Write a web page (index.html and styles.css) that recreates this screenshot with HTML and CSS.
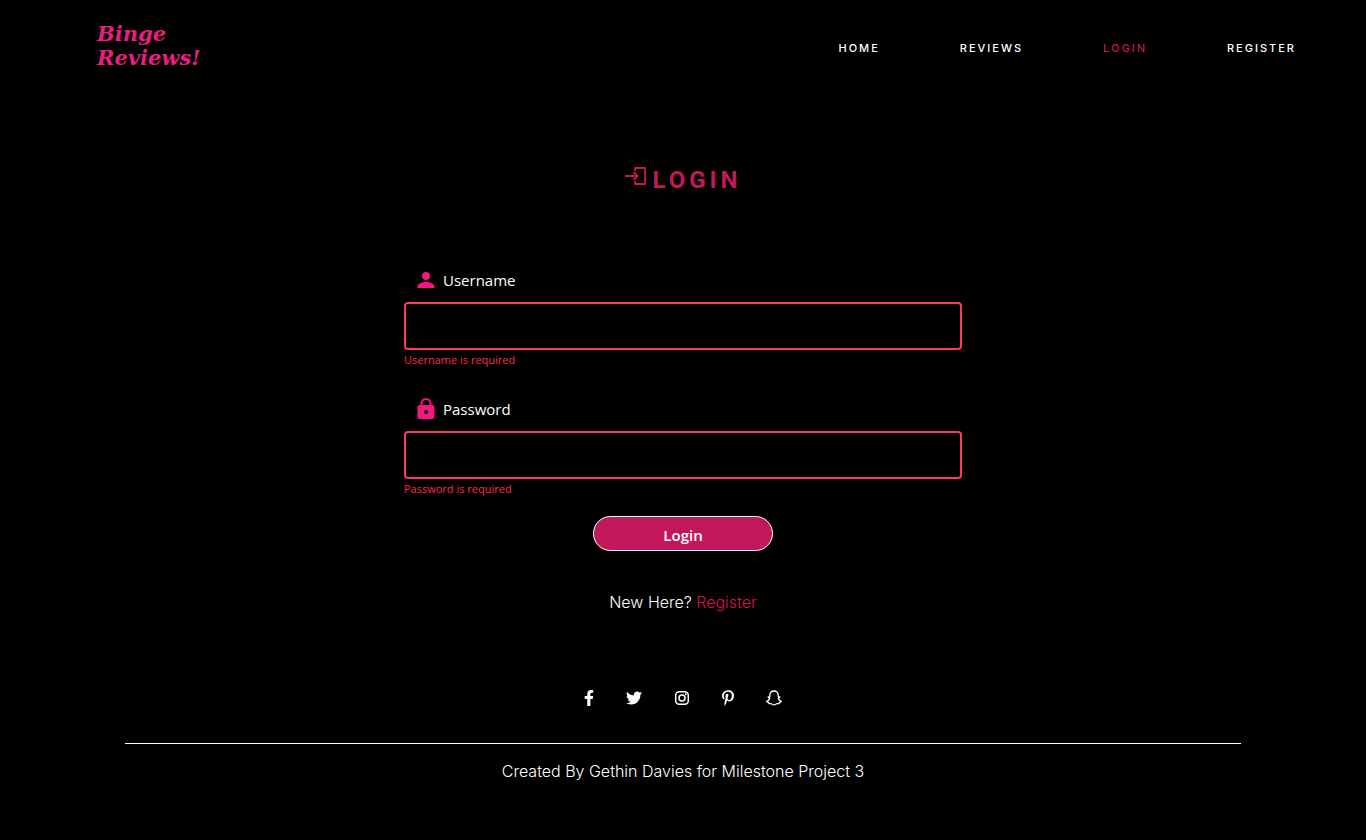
FILE: index.html
```html
<!DOCTYPE html>
<html lang="en">
<head>
<meta charset="utf-8">
<meta name="viewport" content="width=device-width, initial-scale=1">
<title>Binge Reviews! - Login</title>
<link rel="stylesheet" href="styles.css">
</head>
<body>
<header class="header">
  <a class="logo" href="#"><span>Binge</span><span>Reviews!</span></a>
  <nav class="nav">
    <a href="#">HOME</a>
    <a href="#">REVIEWS</a>
    <a href="#" class="active">LOGIN</a>
    <a href="#">REGISTER</a>
  </nav>
</header>
<main class="main">
  <h1 class="title">
    <svg class="title-icon" viewBox="0 0 22 20" aria-hidden="true"><path d="M11 5V2H21V18H11V15M1 10H14M9.500 6L13.500 10L9.500 14" fill="none" stroke="currentColor" stroke-width="1.800"/></svg>
    <span>LOGIN</span>
  </h1>
  <form class="form" novalidate>
    <div class="field">
      <label class="label" for="username">
        <svg class="label-icon" viewBox="0 0 24 24" aria-hidden="true"><path d="M12 12a4 4 0 1 0 0-8 4 4 0 0 0 0 8zm0 2c-3 0-8.500 1.500-8.500 4.200V20h17v-1.800C20.500 15.500 15 14 12 14z"/></svg>
        <span>Username</span>
      </label>
      <input class="input" id="username" type="text" aria-describedby="username-error">
      <p class="error" id="username-error">Username is required</p>
    </div>
    <div class="field">
      <label class="label" for="password">
        <svg class="label-icon" viewBox="0 0 24 24" aria-hidden="true"><path fill-rule="evenodd" d="M18.500 8H17.500V6.500a5.500 5.500 0 0 0-11 0V8h-1A2 2 0 0 0 3.500 10v10a2 2 0 0 0 2 2h13a2 2 0 0 0 2-2V10a2 2 0 0 0-2-2zM12 17a2 2 0 1 1 0-4 2 2 0 0 1 0 4zM15.500 8h-7V6.500a3.500 3.500 0 0 1 7 0z"/></svg>
        <span>Password</span>
      </label>
      <input class="input" id="password" type="password" aria-describedby="password-error">
      <p class="error" id="password-error">Password is required</p>
    </div>
    <button class="submit" type="button">Login</button>
  </form>
  <p class="signup">New Here? <a href="#">Register</a></p>
</main>
<footer class="footer">
  <div class="social">
    <a href="#" aria-label="Facebook"><svg class="facebook" viewBox="0 0 320 512"><path d="M279.140 288l14.220-92.660h-88.910v-60.130c0-25.350 12.420-50.060 52.240-50.060h40.420V6.260S260.430 0 225.360 0c-73.220 0-121.080 44.380-121.080 124.720v70.620H22.890V288h81.390v224h100.170V288z"/></svg></a>
    <a href="#" aria-label="Twitter"><svg viewBox="0 0 512 512"><path d="M459.370 151.716c.325 4.548.325 9.097.325 13.645 0 138.720-105.583 298.558-298.558 298.558-59.452 0-114.680-17.219-161.137-47.106 8.447.974 16.568 1.299 25.340 1.299 49.055 0 94.213-16.568 130.274-44.832-46.132-.975-84.792-31.188-98.112-72.772 6.498.974 12.995 1.624 19.818 1.624 9.421 0 18.843-1.300 27.614-3.573-48.081-9.747-84.143-51.980-84.143-102.985v-1.299c13.969 7.797 30.214 12.670 47.431 13.319-28.264-18.843-46.781-51.005-46.781-87.391 0-19.492 5.197-37.360 14.294-52.954 51.655 63.675 129.300 105.258 216.365 109.807-1.624-7.797-2.599-15.918-2.599-24.040 0-57.828 46.782-104.934 104.934-104.934 30.213 0 57.502 12.670 76.670 33.137 23.715-4.548 46.456-13.320 66.599-25.340-7.798 24.366-24.366 44.833-46.132 57.827 21.117-2.273 41.584-8.122 60.426-16.243-14.292 20.791-32.161 39.308-52.628 54.253z"/></svg></a>
    <a href="#" aria-label="Instagram"><svg viewBox="0 0 16 16"><rect x="1.700" y="1.700" width="12.600" height="12.600" rx="3.500" fill="none" stroke="currentColor" stroke-width="1.500"/><circle cx="8" cy="8" r="3" fill="none" stroke="currentColor" stroke-width="1.500"/><circle cx="11.800" cy="4.200" r="1"/></svg></a>
    <a href="#" aria-label="Pinterest"><svg class="pinterest" viewBox="0 0 384 512"><path d="M204 6.500C101.400 6.500 0 74.900 0 185.600 0 256 39.600 296 63.600 296c9.900 0 15.600-27.600 15.600-35.400 0-9.300-23.700-29.100-23.700-67.800 0-80.400 61.200-137.400 140.400-137.400 68.100 0 118.500 38.700 118.500 109.800 0 53.100-21.300 152.700-90.300 152.700-24.900 0-46.200-18-46.200-43.800 0-37.800 26.400-74.400 26.400-113.400 0-66.200-93.900-54.200-93.900 25.800 0 16.800 2.100 35.400 9.600 50.700-13.800 59.400-42 147.900-42 209.100 0 18.900 2.700 37.500 4.500 56.400 3.400 3.800 1.700 3.400 6.900 1.500 50.400-69 48.600-82.500 71.400-172.800 12.300 23.400 44.100 36 69.300 36 106.200 0 153.900-103.500 153.900-196.800C384 71.300 298.200 6.500 204 6.500z"/></svg></a>
    <a href="#" aria-label="Snapchat"><svg viewBox="0 0 16 16"><path d="M8 1C5.300 1 3.800 2.800 3.800 5v1.800c-.5.300-1.100 0-1.500 0-.5.600.7 1.100 1.300 1.500.3.700-1.400 2.700-3 3 .1.900 1.200 1 2 1.200l.4 1.100c.9 0 1.800-.3 2.600.2.800.6 1.400 1.100 2.400 1.100s1.600-.5 2.400-1.100c.8-.5 1.700-.2 2.600-.2l.4-1.100c.8-.2 1.900-.3 2-1.200-1.600-.3-3.300-2.300-3-3 .6-.4 1.800-.9 1.300-1.500-.4 0-1 .3-1.500 0V5C12.200 2.800 10.700 1 8 1z" fill="none" stroke="currentColor" stroke-width="1.300" stroke-linejoin="round"/></svg></a>
  </div>
  <p class="credit">Created By Gethin Davies for Milestone Project 3</p>
</footer>
</body>
</html>
```
FILE: styles.css
```css
* {
  box-sizing: border-box;
}

body {
  margin: 0;
  background: #000;
  color: #fff;
  font-family: Inter, sans-serif;
  font-size: 16px;
  font-weight: 300;
  line-height: 24px;
}

a {
  color: inherit;
  text-decoration: none;
}

p,
h1 {
  margin: 0;
}

svg {
  display: block;
  fill: currentColor;
}

.header {
  display: flex;
  align-items: center;
  justify-content: space-between;
  min-height: 96px;
  padding: 0 30px 0 97px;
}

.logo {
  display: flex;
  flex-direction: column;
  padding-bottom: 4px;
  color: #e91e80;
  font-family: "DejaVu Serif", serif;
  font-size: 21px;
  font-style: italic;
  font-weight: 700;
  line-height: 24px;
}

.nav {
  display: flex;
}

.nav a {
  padding: 0 40px;
  font-size: 11px;
  font-weight: 500;
  letter-spacing: 2px;
}

.nav .active {
  color: #c2185b;
}

.main {
  display: flex;
  flex-direction: column;
  align-items: center;
  padding-top: 68px;
}

.title {
  display: flex;
  align-items: flex-start;
  gap: 6px;
  color: #c2185b;
  font-family: Roboto, sans-serif;
  font-size: 24px;
  font-weight: 700;
  line-height: 32px;
  letter-spacing: 4px;
}

.title-icon {
  width: 22px;
  height: 20px;
  margin-top: 2px;
}

.form {
  display: flex;
  flex-direction: column;
  align-items: center;
  width: 100%;
  max-width: 558px;
  margin-top: 72px;
}

.field {
  width: 100%;
  margin-bottom: 27px;
  font-family: "Open Sans", sans-serif;
  font-weight: 400;
}

.label {
  display: flex;
  align-items: center;
  gap: 5px;
  padding-left: 10px;
  font-size: 15px;
}

.label-icon {
  width: 24px;
  height: 24px;
  color: #f5167e;
}

.input {
  display: block;
  width: 100%;
  height: 48px;
  margin-top: 10px;
  padding: 0 12px;
  border: 2px solid #ff3860;
  border-radius: 4px;
  background: #000;
  color: #fff;
  font: inherit;
}

.error {
  color: #ff2848;
  font-size: 11px;
  line-height: 20px;
}

.field:nth-child(2) {
  margin-bottom: 17px;
}

.submit {
  width: 180px;
  height: 35px;
  padding: 2px 0 0;
  border: 1px solid #fff;
  border-radius: 18px;
  background: #c2185b;
  color: #fff;
  font-family: "Open Sans", sans-serif;
  font-size: 15px;
  font-weight: 600;
}

.signup {
  margin-top: 39px;
}

.signup a {
  color: #d81050;
}

.footer {
  width: calc(100% - 48px);
  max-width: 1116px;
  margin: 76px auto 0;
  text-align: center;
}

.social {
  display: flex;
  justify-content: center;
  gap: 32px;
  padding-bottom: 37px;
  border-bottom: 1px solid #fff;
}

.social svg {
  width: 16px;
  height: 16px;
}

.social .facebook {
  width: 10px;
}

.social .pinterest {
  width: 12px;
}

.credit {
  margin-top: 15px;
}
```
